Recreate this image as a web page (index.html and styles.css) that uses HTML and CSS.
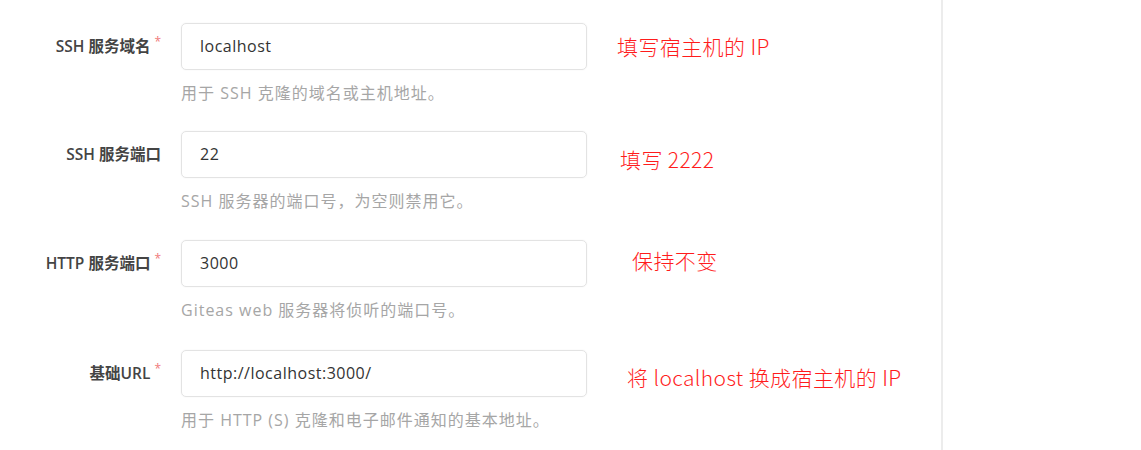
FILE: index.html
```html
<!DOCTYPE html>
<html lang="zh-CN">
<head>
<meta charset="utf-8">
<title>Gitea 设置</title>
<link rel="stylesheet" href="styles.css">
</head>
<body>
<main class="panel">
  <div class="row row-1">
    <label class="label">SSH 服务域名<span class="req">*</span></label>
    <div class="field">
      <div class="input">localhost</div>
      <div class="help">用于 SSH 克隆的域名或主机地址。</div>
    </div>
    <div class="note note-1">填写宿主机的 IP</div>
  </div>
  <div class="row row-2">
    <label class="label">SSH 服务端口</label>
    <div class="field">
      <div class="input">22</div>
      <div class="help">SSH 服务器的端口号，为空则禁用它。</div>
    </div>
    <div class="note note-2">填写 2222</div>
  </div>
  <div class="row row-3">
    <label class="label">HTTP 服务端口<span class="req">*</span></label>
    <div class="field">
      <div class="input">3000</div>
      <div class="help">Giteas web 服务器将侦听的端口号。</div>
    </div>
    <div class="note note-3">保持不变</div>
  </div>
  <div class="row row-4">
    <label class="label">基础URL<span class="req">*</span></label>
    <div class="field">
      <div class="input">http://localhost:3000/</div>
      <div class="help">用于 HTTP (S) 克隆和电子邮件通知的基本地址。</div>
    </div>
    <div class="note note-4">将 localhost 换成宿主机的 IP</div>
  </div>
</main>
</body>
</html>
```
FILE: styles.css
```css
html, body {
  margin: 0;
  padding: 0;
  background: #fff;
}
body {
  font-family: "Open Sans", "Noto Sans CJK SC", sans-serif;
  color: #333;
}
.panel {
  width: 943px;
  height: 450px;
  overflow: hidden;
  box-sizing: border-box;
  border-right: 2px solid #ececec;
  padding-top: 23px;
  display: flex;
  flex-direction: column;
}
.row {
  display: flex;
  align-items: flex-start;
  flex: none;
  height: 108px;
}
.row-2 { height: 109px; }
.row-3 { height: 110px; }
.label {
  width: 161px;
  flex: none;
  text-align: right;
  font-size: 15.5px;
  font-weight: 600;
  color: #444;
  line-height: 47px;
  margin-right: 20px;
  white-space: nowrap;
}
.req {
  color: #f07a7a;
  font-size: 12px;
  font-weight: 400;
  vertical-align: 6px;
  margin-left: 4px;
  line-height: 1;
}
.field {
  width: 406px;
  flex: none;
}
.input {
  height: 47px;
  box-sizing: border-box;
  border: 1px solid #e3e3e3;
  border-radius: 5px;
  box-shadow: 0 0 2px rgba(0, 0, 0, 0.06);
  padding-left: 18px;
  font-size: 16px;
  letter-spacing: 0.5px;
  line-height: 45px;
  color: #333;
}
.help {
  margin-top: 12px;
  font-size: 16px;
  letter-spacing: 1px;
  line-height: 22px;
  color: #a6a6a6;
  white-space: nowrap;
}
.note {
  font-family: "Noto Sans CJK SC", "Noto Sans", sans-serif;
  font-size: 21px;
  font-weight: 300;
  letter-spacing: 0.4px;
  line-height: 28px;
  color: #ff1c1c;
  white-space: nowrap;
}
.note-1 { margin-left: 30px; margin-top: 9px; }
.note-2 { margin-left: 33px; margin-top: 14px; }
.note-3 { margin-left: 45px; margin-top: 6px; }
.note-4 { margin-left: 40px; margin-top: 13px; }
```
